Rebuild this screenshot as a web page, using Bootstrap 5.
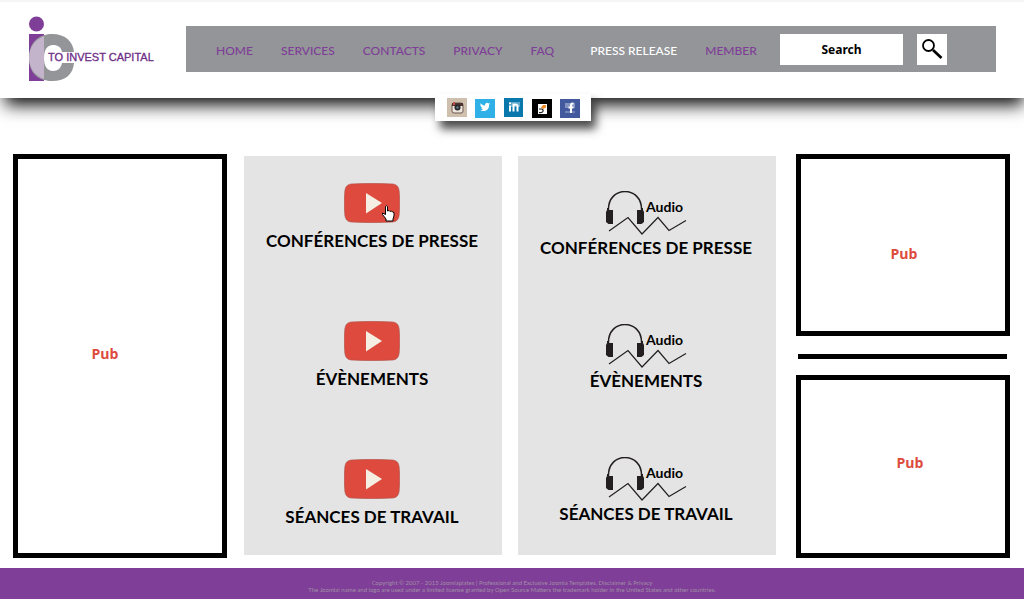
<!DOCTYPE html>
<html lang="fr">
<head>
<meta charset="utf-8">
<meta name="viewport" content="width=device-width, initial-scale=1">
<title>To Invest Capital – Press release</title>
<link href="https://cdn.jsdelivr.net/npm/bootstrap@5.3.0/dist/css/bootstrap.min.css" rel="stylesheet">
<style>
:root { --brand: #7f3e97; --steel: #939598; --panel: #e4e4e4; --coral: #de4a3e; }
body { font-family: Lato, "Open Sans", sans-serif; color: #000; background: #fff; padding-bottom: 2px; }
.site-header { border-top: 2px solid #f5f5f5; min-height: 98px; background: #fff; box-shadow: 2px 10px 16px -3px rgba(0,0,0,.95); }
.brand-logo { width: 186px; padding-left: 28px; }
.brand-logo text { font: 11px "Liberation Sans", sans-serif; fill: #6d2c86; stroke: #6d2c86; stroke-width: .3px; }
.menu-bar { background: var(--steel); height: 46px; margin: 24px 28px 26px 0; padding-left: 30px; }
.menu-links { gap: 28px; width: 564px; padding-top: 3px; font-size: 12px; line-height: 16px; font-weight: 500; }
.menu-links a { color: var(--brand); white-space: nowrap; }
.menu-links a.active { color: #fff; }
.search-box { width: 123px; height: 31px; font: bold 12px "Noto Sans", sans-serif; text-align: center; }
.search-box::placeholder { color: #000; opacity: 1; }
.search-btn { width: 30px; height: 31px; background: #fff; margin-left: 14px; }
.social-tab { z-index: 2; margin-top: -4px; width: 156px; height: 27px; padding: 4px 11px 3px 12px; background: #fff; box-shadow: 5px 8px 10px rgba(0,0,0,.7); margin-left: 2px; }
.page-grid { display: grid; grid-template-columns: 215fr 258fr 258fr 218fr; column-gap: 16px; padding: 33px 14px 10px 13px; }
.ad-frame { border: 5px solid #000; color: var(--coral); font: 700 14px/20px "Open Sans", sans-serif; text-decoration: none; }
.ad-tall { padding: 0 30px 4px 0; margin-right: 1px; }
.ad-top { padding-top: 18px; padding-left: 2px; }
.ad-bottom { padding-bottom: 8px; padding-left: 14px; }
.ad-rule { height: 5px; background: #000; opacity: 1; border: 0; margin: 18px 3px 16px 2px; }
.ad-side { display: grid; grid-template-rows: 182fr auto 183fr; padding-left: 4px; }
.media-panel { background: var(--panel); margin: 2px 0 3px; padding-right: 2px; }
.media-panel a { color: #000; font-size: 17px; line-height: 20px; font-weight: 700; white-space: nowrap; }
.video-list { padding-top: 27px; }
.video-list a { gap: 8px; margin-bottom: 70px; }
.audio-list { padding-top: 35px; }
.audio-list a { gap: 3px; margin-bottom: 66px; }
.media-panel a:last-child { margin-bottom: 0; }
.audio-list text { font: bold 14px Lato, sans-serif; }
.video-list .hand { left: 37px; top: 22px; }
.site-footer { background: var(--brand); color: #a08fa6; font: 400 6px/7px Lato, sans-serif; min-height: 31px; padding-top: 11px; }
</style>
</head>
<body class="d-flex flex-column min-vh-100">
<svg class="d-none" aria-hidden="true">
  <symbol id="play" viewBox="0 0 56 40">
    <path d="M7 1Q28-.5 49 1Q54.500 1.500 55.200 8Q56.300 20 55.200 32Q54.500 38.500 49 39Q28 40.500 7 39Q1.500 38.500 .800 32Q-.300 20 .800 8Q1.500 1.500 7 1Z" fill="#de4a3e" stroke="#a9564e" stroke-width=".6"/>
    <path d="M22 10v20.500L38 20Z" fill="#f4efe2"/>
  </symbol>
  <symbol id="phones" viewBox="0 0 82 44">
    <path d="M3.500 20C2-6 38-6 36.500 20" fill="none" stroke="#231f20" stroke-width="1.500"/>
    <path d="M2 17h1.500v2H8v14H3.500L1 31V21l1-2ZM38 17h-1.500v2H32v14h4.500l2.500-2V21l-1-2Z" fill="#231f20"/>
    <path d="M4 40L23 26.500L37 43L53 26.500L64 39.500L81 29.500" fill="none" stroke="#231f20" stroke-width="1.200"/>
  </symbol>
</svg>

<header class="site-header d-flex">
  <a href="#" class="brand-logo flex-shrink-0 pt-3" aria-label="To Invest Capital">
    <svg width="128" height="66" viewBox="0 0 128 66" overflow="visible">
      <circle cx="8.500" cy="6" r="7.500" fill="#7f3e97"/>
      <path d="M1 16h15v47H1Z" fill="#7f3e97"/>
      <path fill-rule="evenodd" d="M24 16C38 16 45 24 46 34H34C33 29 30 27 25 27C19 27 16 32 16 40C16 48 19 53 25 53C30 53 33 50 34 45H46C45 56 38 63 24 63C9 63 1 54 1 40C1 25 10 16 24 16Z" fill="#939598"/>
      <path d="M16 18C7 22 1 29 1 40C1 50 7 58 16 61Z" fill="#c3b4cb"/>
      <text x="20" y="43">TO INVEST CAPITAL</text>
    </svg>
  </a>
  <div class="menu-bar d-flex align-items-center flex-grow-1">
    <nav class="menu-links d-flex flex-shrink-0" aria-label="Menu principal">
      <a class="text-decoration-none" href="#">HOME</a>
      <a class="text-decoration-none" href="#">SERVICES</a>
      <a class="text-decoration-none" href="#">CONTACTS</a>
      <a class="text-decoration-none" href="#">PRIVACY</a>
      <a class="text-decoration-none me-2" href="#">FAQ</a>
      <a class="text-decoration-none active" href="#" aria-current="page">PRESS RELEASE</a>
      <a class="text-decoration-none" href="#">MEMBER</a>
    </nav>
    <form class="d-flex" role="search">
      <input class="search-box border-0 p-0" type="text" placeholder="Search" aria-label="Search">
      <button class="search-btn border-0 p-0 d-flex align-items-center justify-content-center" type="button" aria-label="Search">
        <svg width="22" height="22" viewBox="0 0 22 22" fill="none" stroke="#000"><circle cx="7.500" cy="7.500" r="5.500" stroke-width="1.800"/><path d="M12 12L20.500 20" stroke-width="2.800"/></svg>
      </button>
    </form>
  </div>
</header>

<div class="social-tab d-flex justify-content-between position-relative align-self-center">
  <a href="#" class="d-flex" aria-label="Instagram"><svg width="20" height="20" viewBox="0 0 20 20"><path d="M0 0h20v19H0Z" fill="#cfc0ae"/><rect x="5" y="5" width="11" height="10" rx="2" fill="#eee5dc" stroke="#6c5850"/><path d="M5 5h11v3H5Z" fill="#4c3531"/><path d="M6 4h2v3H6Z" fill="#c55048"/><circle cx="10.500" cy="9.500" r="3" fill="#27272b"/><circle cx="10.500" cy="9.500" r="1.200" fill="#66818b"/></svg></a>
  <a href="#" class="d-flex" aria-label="Twitter"><svg width="20" height="20" viewBox="0 0 20 20"><path d="M0 1h20v19H0Z" fill="#2fb0e7"/><path d="M5.500 5C7 7 8.500 7.500 10 7.500C9.800 5 12.500 4 13.500 5.500L15 5L14 7C14.500 11 11 14.500 5.500 12.500L8 11.500L6 10L7 9.500L5.500 8Z" fill="#fff"/></svg></a>
  <a href="#" class="d-flex" aria-label="LinkedIn"><svg width="20" height="20" viewBox="0 0 20 20"><path d="M0 0h19v19H0Z" fill="#0878ad"/><path d="M5 4h11v5H5Z" fill="#5fa9cc"/><path d="M6 7.500v6M6 4.500v1.500M9.500 13.500V5.500M9.500 8C11 5.500 14 6.500 13.500 9v4.500" fill="none" stroke="#fff" stroke-width="2"/></svg></a>
  <a href="#" class="d-flex" aria-label="Journal"><svg width="20" height="20" viewBox="0 0 20 20"><path d="M0 1h20v19H0Z"/><path d="M6 6h9v10H6Z" fill="#fff"/><path d="M7 11H10Q12 12 10.500 14Q9 15 7 14.500" fill="none" stroke="#222" stroke-width="1.200"/><path d="M9 9.500L11 7H14V9.500L11 11Z" fill="#f08a24"/></svg></a>
  <a href="#" class="d-flex" aria-label="Facebook"><svg width="20" height="20" viewBox="0 0 20 20"><path d="M0 1h20v19H0Z" fill="#425a9d"/><path d="M5 5h10v5H5Z" fill="#8495c3"/><path d="M5 13h10v2H5Z" fill="#7184b8"/><path d="M13.500 5.500h-1Q11 5.500 11 7.500V15M8.500 9.500H13.500" fill="none" stroke="#fff" stroke-width="2"/></svg></a>
</div>

<main class="page-grid flex-grow-1">
  <a href="#" class="ad-frame ad-tall d-flex align-items-center justify-content-center">Pub</a>

  <section class="media-panel video-list" aria-label="Vidéos">
    <a href="#" class="d-flex flex-column align-items-center text-decoration-none">
      <span class="d-flex position-relative"><svg width="56" height="40"><use href="#play"/></svg>
        <svg class="hand position-absolute" width="15" height="17" viewBox="0 0 15 17"><path d="M4.500 1.500Q5.500 0 6.500 1.500V6L8 5.500L9 6.500L10.500 6L11.500 7L13 7.500V11L12 14V16H5V14L1.500 9.500V8L4.500 9.500Z" fill="#fff" stroke="#000"/></svg></span>
      <span>CONFÉRENCES DE PRESSE</span>
    </a>
    <a href="#" class="d-flex flex-column align-items-center text-decoration-none">
      <svg width="56" height="40"><use href="#play"/></svg><span>ÉVÈNEMENTS</span>
    </a>
    <a href="#" class="d-flex flex-column align-items-center text-decoration-none">
      <svg width="56" height="40"><use href="#play"/></svg><span>SÉANCES DE TRAVAIL</span>
    </a>
  </section>

  <section class="media-panel audio-list" aria-label="Audio">
    <a href="#" class="d-flex flex-column align-items-center text-decoration-none">
      <svg width="82" height="44"><use href="#phones"/><text x="41" y="21">Audio</text></svg><span>CONFÉRENCES DE PRESSE</span>
    </a>
    <a href="#" class="d-flex flex-column align-items-center text-decoration-none">
      <svg width="82" height="44"><use href="#phones"/><text x="41" y="21">Audio</text></svg><span>ÉVÈNEMENTS</span>
    </a>
    <a href="#" class="d-flex flex-column align-items-center text-decoration-none">
      <svg width="82" height="44"><use href="#phones"/><text x="41" y="21">Audio</text></svg><span>SÉANCES DE TRAVAIL</span>
    </a>
  </section>

  <aside class="ad-side">
    <a href="#" class="ad-frame ad-top d-flex align-items-center justify-content-center">Pub</a>
    <hr class="ad-rule">
    <a href="#" class="ad-frame ad-bottom d-flex align-items-center justify-content-center">Pub</a>
  </aside>
</main>

<footer class="site-footer text-center">
  <p class="m-0">Copyright © 2007 - 2015 Joomlaplates | Professional and Exclusive Joomla Templates. Disclaimer &amp; Privacy</p>
  <p class="m-0">The Joomla! name and logo are used under a limited license granted by Open Source Matters the trademark holder in the United States and other countries.</p>
</footer>
<script src="https://cdn.jsdelivr.net/npm/bootstrap@5.3.0/dist/js/bootstrap.bundle.min.js"></script>
</body>
</html>
